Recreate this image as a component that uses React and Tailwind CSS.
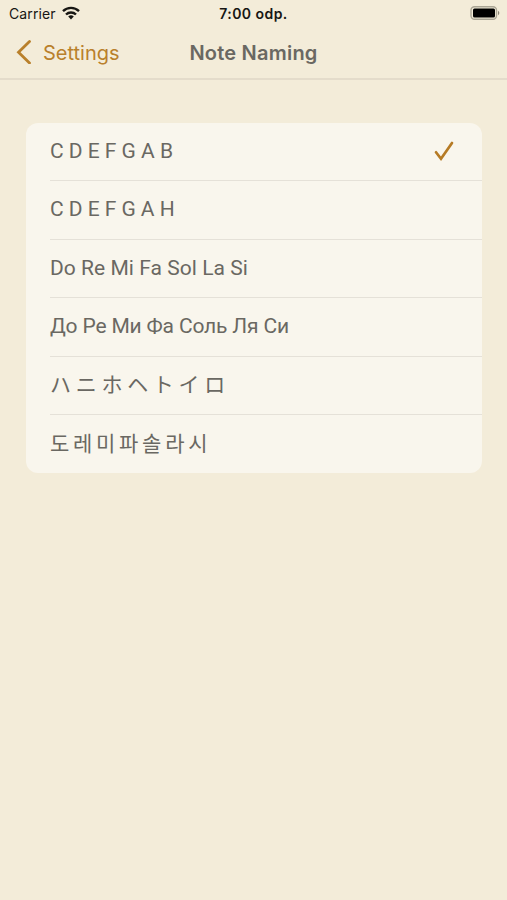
import React, { useState } from "react";

const namings = [
  { id: "english", label: "C D E F G A B", className: "font-['Roboto',sans-serif] tracking-[-0.03px]" },
  { id: "german", label: "C D E F G A H", className: "font-['Roboto',sans-serif] tracking-[-0.05px]" },
  { id: "latin", label: "Do Re Mi Fa Sol La Si", className: "font-['Roboto',sans-serif] tracking-[0.04px]" },
  { id: "cyrillic", label: "До Ре Ми Фа Соль Ля Си", className: "font-['Roboto',sans-serif] tracking-[-0.17px]" },
  { id: "japanese", label: "ハ ニ ホ ヘ ト イ ロ", className: "font-['Roboto','Noto_Sans_CJK_JP',sans-serif] tracking-[-0.25px]" },
  { id: "korean", label: "도 레 미 파 솔 라 시", className: "font-['Roboto','Noto_Sans_CJK_KR',sans-serif] tracking-[-0.75px]" },
];

function StatusBar() {
  return (
    <div className="grid h-[27px] grid-cols-3 items-center pl-[9px] pr-[7px] font-['Inter',sans-serif] text-[14px] text-[#171613]">
      <div className="flex items-center gap-[6px]">
        <span className="tracking-[0.1px]">Carrier</span>
        <svg className="-mt-px" width="18" height="14" viewBox="0 0 18 13" fill="none" stroke="currentColor" strokeWidth="2.4">
          <path d="M1 4.6a11.5 11.5 0 0 1 16 0" />
          <path d="M4 8a7.2 7.2 0 0 1 10 0" />
          <path d="M9 13 6.2 10.1a4 4 0 0 1 5.6 0Z" fill="currentColor" stroke="none" />
        </svg>
      </div>
      <span className="-ml-[2px] text-center font-semibold tracking-[0.45px]">7:00 odp.</span>
      <svg className="-mt-px justify-self-end" width="30" height="14" viewBox="0 0 30 14" fill="none">
        <rect x="1" y="0.7" width="25.5" height="12.6" rx="3.5" stroke="#aaa595" strokeWidth="1.4" />
        <rect x="3" y="2.5" width="22" height="9" rx="1.5" fill="#000" />
        <path d="M28 4.8v4.4c1.8-.8 1.8-3.6 0-4.4Z" fill="#8b8678" />
      </svg>
    </div>
  );
}

export default function App() {
  const [selected, setSelected] = useState("english");

  return (
    <div className="min-h-screen bg-[#f3ecd9] text-[#6a6862]">
      <StatusBar />
      <header className="grid h-[53px] grid-cols-3 items-center border-b-2 border-[#e4dccb] px-4 font-['Inter',sans-serif] text-[20px]">
        <button className="flex items-center gap-[11px] text-[#b9802b]">
          <svg className="-mt-0.5" width="16" height="24" viewBox="0 0 16 24" fill="none" stroke="currentColor" strokeWidth="2.8" strokeLinecap="round">
            <path d="M13.5 1.5 2.5 12.2 13.5 23" />
          </svg>
          <span>Settings</span>
        </button>
        <h1 className="whitespace-nowrap text-center font-semibold tracking-[0.22px]">Note Naming</h1>
      </header>
      <main className="pt-[42.5px] pr-[25px] pl-[25.5px]">
        <ul className="overflow-hidden rounded-[12px] bg-[#f9f6ed] pl-[24.5px]">
          {namings.map((naming, i) => (
            <li key={naming.id} className={i > 0 ? "border-t border-[#e5e1d8]" : ""}>
              <button
                onClick={() => setSelected(naming.id)}
                className="flex h-[57.6px] w-full items-center justify-between pr-[28px] text-left text-[21px]"
              >
                <span className={naming.className}>{naming.label}</span>
                {selected === naming.id && (
                  <svg width="20" height="20" viewBox="0 0 20 20" fill="none" stroke="#b67b25" strokeWidth="2.7" strokeLinecap="round">
                    <path d="m2 11.2 5 6.5L18 2" />
                  </svg>
                )}
              </button>
            </li>
          ))}
        </ul>
      </main>
    </div>
  );
}
